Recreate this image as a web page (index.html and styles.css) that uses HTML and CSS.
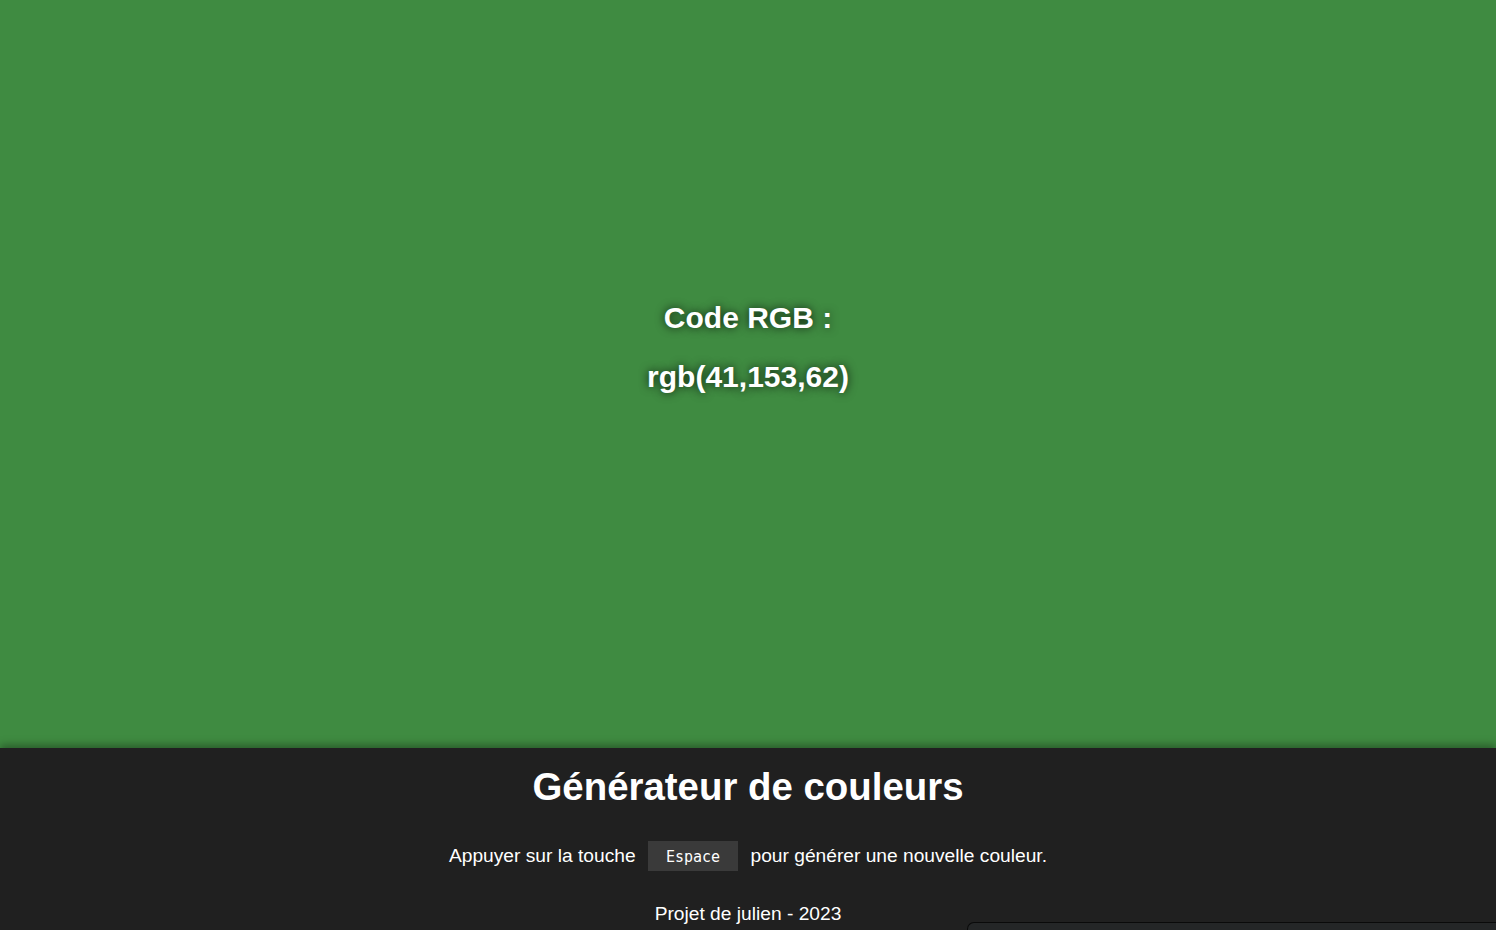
FILE: index.html
```html
<!DOCTYPE html>
<html lang="fr">
<head>
<meta charset="utf-8">
<title>Générateur de couleurs</title>
<link rel="stylesheet" href="styles.css">
</head>
<body>
<main class="color-area">
  <div class="color-info">
    <h2 class="label">Code RGB :</h2>
    <h2 class="value">rgb(41,153,62)</h2>
  </div>
</main>
<footer class="footer">
  <h1 class="title">Générateur de couleurs</h1>
  <p class="hint">Appuyer sur la touche <kbd class="key">Espace</kbd> pour générer une nouvelle couleur.</p>
  <p class="credit">Projet de julien - 2023</p>
  <div class="corner-panel"></div>
</footer>
</body>
</html>
```
FILE: styles.css
```css
html, body {
  margin: 0;
  padding: 0;
  height: 100%;
  overflow: hidden;
}
body {
  font-family: "Liberation Sans", Arial, sans-serif;
  color: #fff;
  background: #202020;
  display: flex;
  flex-direction: column;
}
.color-area {
  height: 748px;
  flex-shrink: 0;
  box-sizing: border-box;
  padding-bottom: 53px;
  background: #3f8b41;
  display: flex;
  align-items: center;
  justify-content: center;
}
.color-info {
  text-align: center;
  text-shadow: 0 0 10px rgba(0, 0, 0, 0.8);
}
.label, .value {
  font-size: 30px;
  font-weight: bold;
  margin: 0;
  line-height: 34px;
}
.label {
  margin-bottom: 25px;
}
.footer {
  position: relative;
  flex: 1;
  background: #202020;
  text-align: center;
  box-shadow: 0 -3px 8px rgba(0, 0, 0, 0.35);
  padding-top: 17px;
}
.title {
  font-size: 38.4px;
  font-weight: bold;
  margin: 0;
  line-height: 44px;
}
.hint {
  font-size: 19.2px;
  margin: 0;
  margin-top: 31px;
  line-height: 32px;
}
.key {
  display: inline-block;
  font-family: "DejaVu Sans Mono", monospace;
  font-size: 15px;
  background: #3a3a3a;
  color: #fff;
  padding: 0 18px;
  height: 30px;
  line-height: 32px;
  margin: 0 7px;
  vertical-align: middle;
  position: relative;
  top: -1px;
}
.credit {
  font-size: 19.2px;
  margin: 0;
  margin-top: 31px;
  line-height: 22px;
}
.corner-panel {
  position: absolute;
  right: 0;
  bottom: 0;
  width: 528px;
  height: 7px;
  background: #242627;
  border: 1px solid #0a0a0a;
  border-right: none;
  border-bottom: none;
  border-top-left-radius: 7px;
}
```
